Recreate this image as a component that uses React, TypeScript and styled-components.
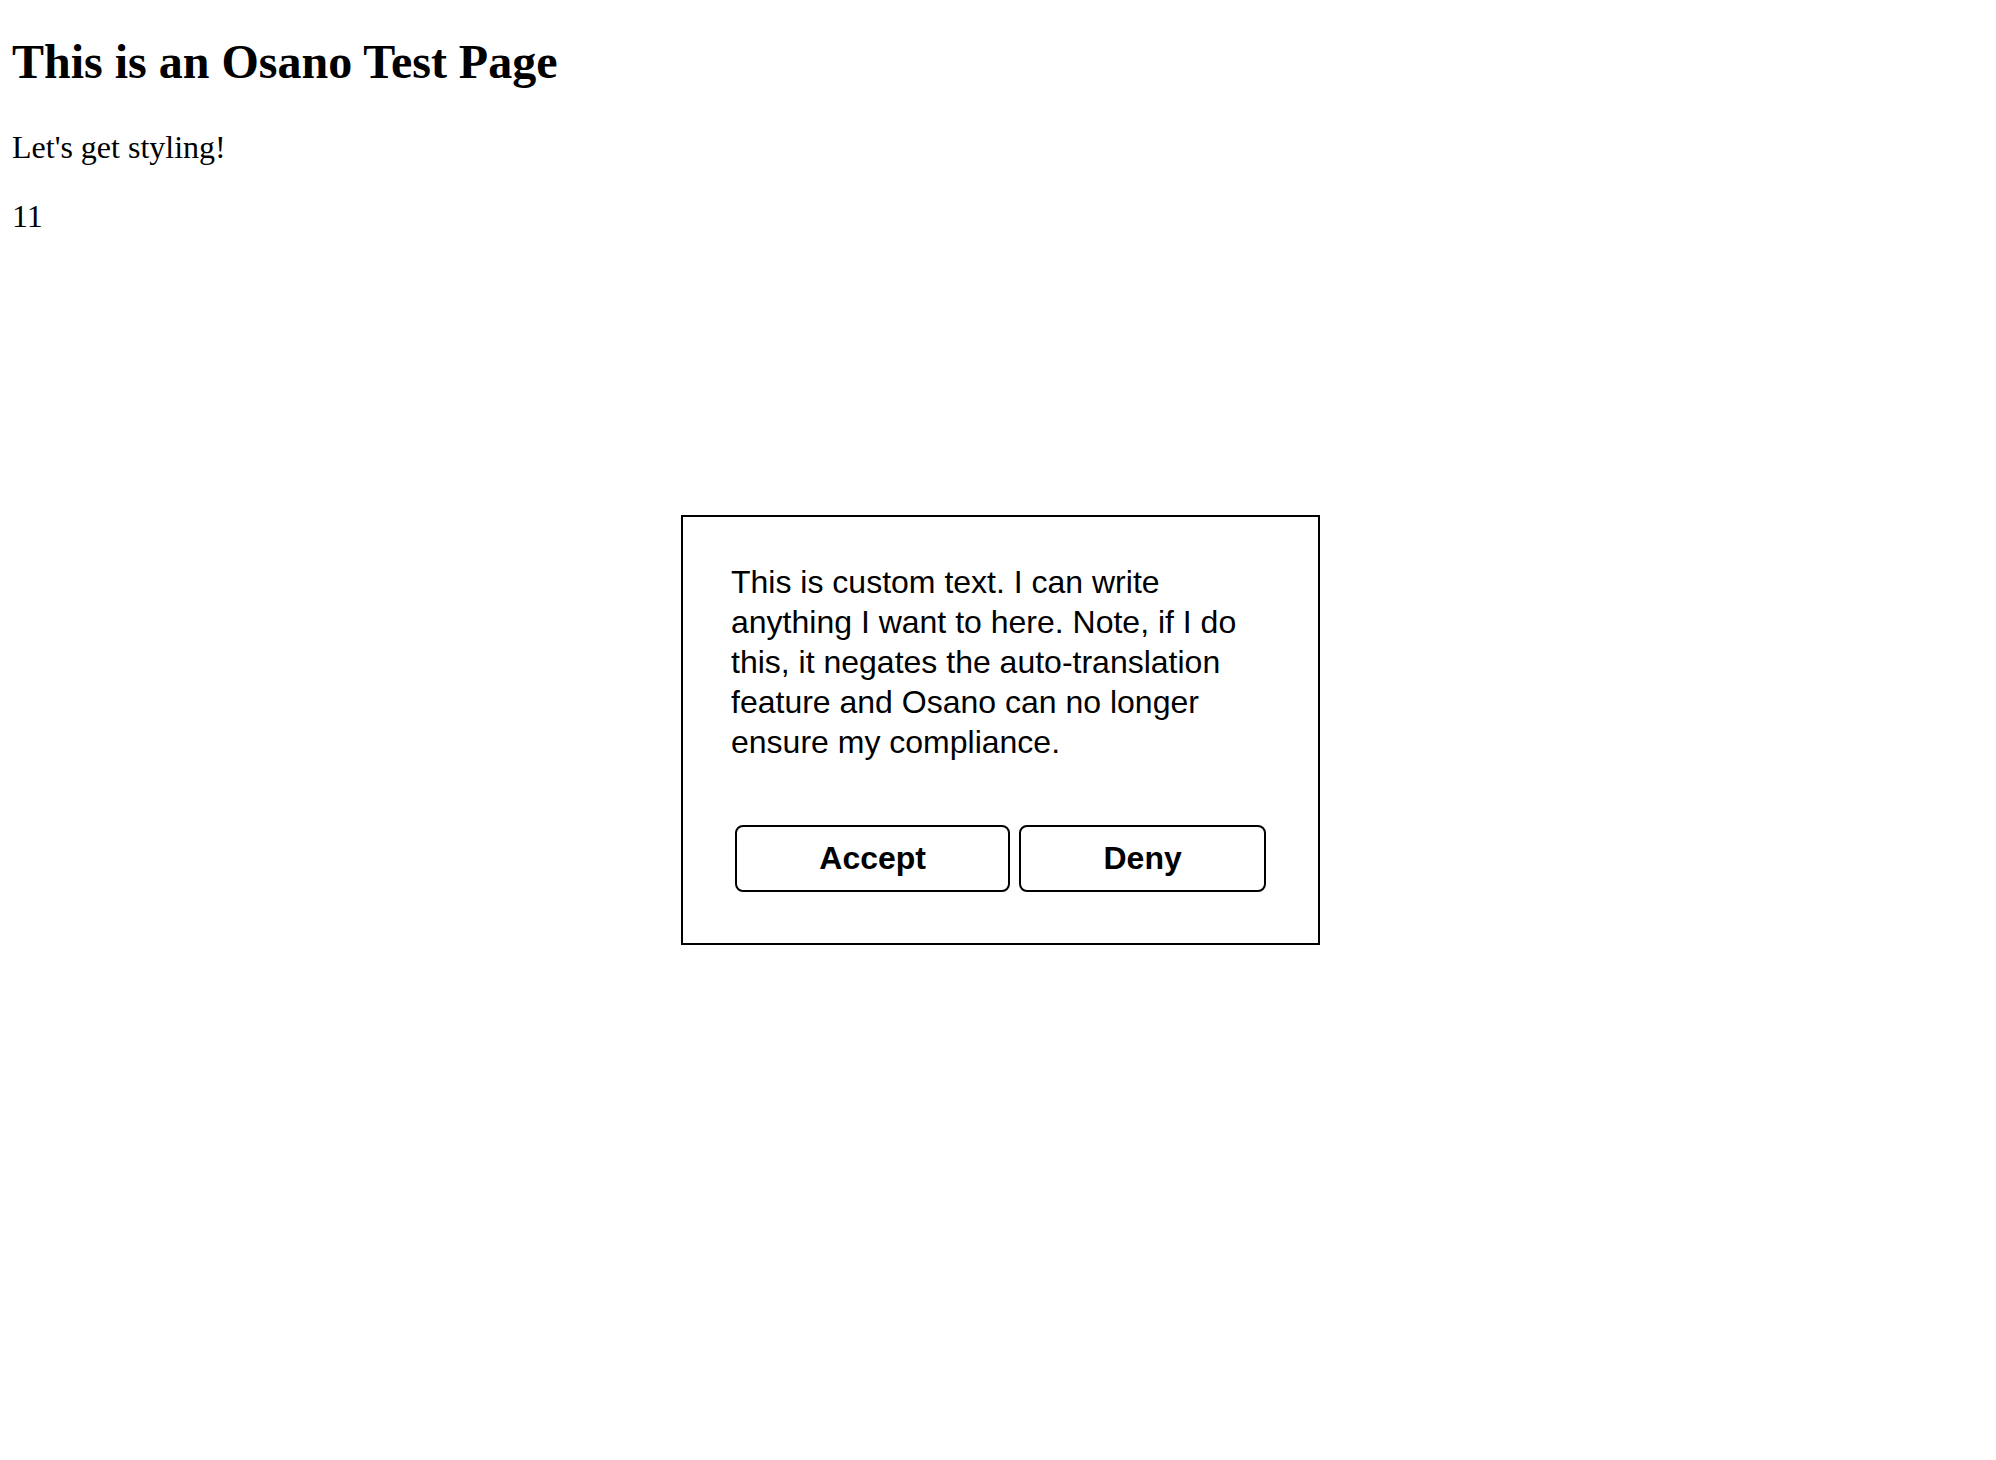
import React from 'react';
import styled, { createGlobalStyle } from 'styled-components';

const GlobalStyle = createGlobalStyle`
    html, body {
        margin: 0;
        padding: 0;
        background: #fff;
    }

    body {
        padding: 0 12px;
        color: #000;
        font-family: "Liberation Serif", "Times New Roman", serif;
    }
`;

export const Page = styled.main`
    display: flow-root;
`;

export const Title = styled.h1`
    margin: 34px 0 40px;
    font-size: 48px;
    font-weight: bold;
    line-height: normal;
`;

export const Text = styled.p`
    margin: 32px 0;
    font-size: 32px;
    line-height: normal;
`;

export const Overlay = styled.div`
    position: fixed;
    inset: 0;
    display: flex;
    align-items: center;
    justify-content: center;
    padding: 0 0 0 5px;
    pointer-events: none;
`;

export const Dialog = styled.div`
    box-sizing: border-box;
    width: 639px;
    padding: 45px 48px 51px;
    border: 2px solid #000;
    background: #fff;
    color: #000;
    font-family: "Liberation Sans", Arial, Helvetica, sans-serif;
    pointer-events: auto;
`;

export const Message = styled.p`
    margin: 0;
    font-size: 32px;
    line-height: 40px;
`;

export const Actions = styled.div`
    display: flex;
    gap: 9px;
    margin-top: 63px;
    padding: 0 4px;
`;

export const Button = styled.button`
    flex: 1 1 auto;
    box-sizing: border-box;
    height: 67px;
    padding: 0 16px;
    border: 2px solid #000;
    border-radius: 8px;
    background: #fff;
    color: #000;
    font-family: "Liberation Sans", Arial, Helvetica, sans-serif;
    font-size: 32px;
    font-weight: bold;
    cursor: pointer;
`;

export default function App() {
    return (
        <>
            <GlobalStyle />
            <Page>
                <Title>This is an Osano Test Page</Title>
                <Text>Let's get styling!</Text>
                <Text>11</Text>
            </Page>
            <Overlay>
                <Dialog role="dialog" aria-label="Cookie consent">
                    <Message>
                        This is custom text. I can write anything I want to here. Note, if I do this, it negates the
                        auto-translation feature and Osano can no longer ensure my compliance.
                    </Message>
                    <Actions>
                        <Button>Accept</Button>
                        <Button>Deny</Button>
                    </Actions>
                </Dialog>
            </Overlay>
        </>
    );
}
